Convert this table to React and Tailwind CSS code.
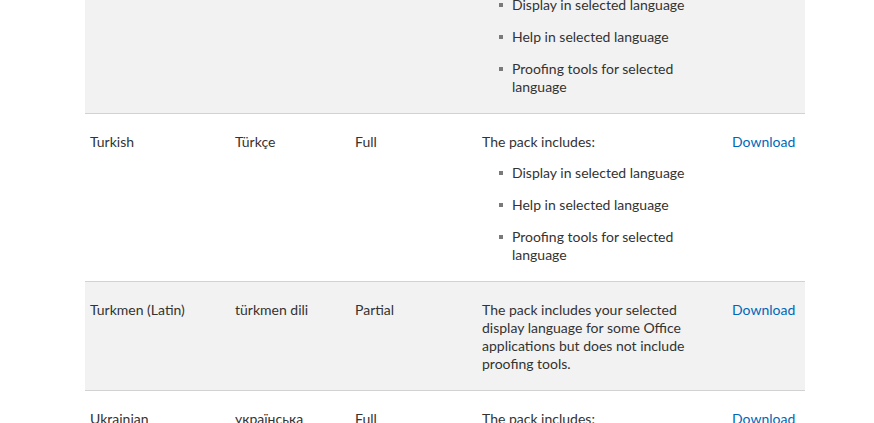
import React from "react";

const rows = [
  { name: "Thai", native: "ไทย", type: "Full", full: true, gray: true },
  { name: "Turkish", native: "Türkçe", type: "Full", full: true, gray: false },
  { name: "Turkmen (Latin)", native: "türkmen dili", type: "Partial", full: false, gray: true },
  { name: "Ukrainian", native: "українська", type: "Full", full: true, gray: false },
];

function Bullet({ children }) {
  return (
    <li className="flex mt-[14px] first:mt-[13px]">
      <span className="w-[30px] shrink-0 flex justify-end pr-[9px] pt-[7px]">
        <span className="block w-[4px] h-[4px] bg-[#7a7a7a]" />
      </span>
      <span>{children}</span>
    </li>
  );
}

function Row({ r }) {
  return (
    <div
      className={
        "grid grid-cols-[145px_120px_127px_250px_78px] border-b border-[#d2d2d2] pt-[19px] pb-[17px] " +
        (r.gray ? "bg-[#f2f2f2]" : "bg-white")
      }
    >
      <div className="pl-[5px] pr-[10px]">{r.name}</div>
      <div className="pl-[5px] pr-[10px]">{r.native}</div>
      <div className="pl-[5px] pr-[10px]">{r.type}</div>
      <div className="pl-[5px] pr-[18px]">
        {r.full ? (
          <>
            <p>The pack includes:</p>
            <ul>
              <Bullet>Display in selected language</Bullet>
              <Bullet>Help in selected language</Bullet>
              <Bullet>
                Proofing tools for selected
                <br />
                language
              </Bullet>
            </ul>
          </>
        ) : (
          <p>
            The pack includes your selected
            <br />
            display language for some Office
            <br />
            applications but does not include
            <br />
            proofing tools.
          </p>
        )}
      </div>
      <div className="pl-[5px]">
        <a href="#" className="text-[#0067b8]">
          Download
        </a>
      </div>
    </div>
  );
}

export default function App() {
  return (
    <div className="h-[423px] overflow-hidden bg-white">
      <div
        className="w-[720px] ml-[85px] -mt-[54px] text-[14px] leading-[18px] text-[#333333]"
        style={{ fontFamily: 'Lato, "Segoe UI", sans-serif' }}
      >
        {rows.map((r) => (
          <Row key={r.name} r={r} />
        ))}
      </div>
    </div>
  );
}
